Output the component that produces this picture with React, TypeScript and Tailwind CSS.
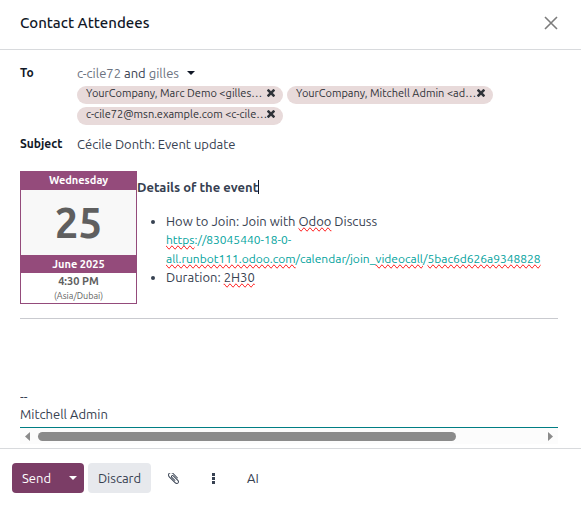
import React from "react";

const recipients = [
  "YourCompany, Marc Demo <gilles…",
  "YourCompany, Mitchell Admin <ad…",
  "c-cile72@msn.example.com <c-cile…",
];

function RemoveIcon() {
  return (
    <svg viewBox="302 366 1188 1188" className="size-2" fill="currentColor" aria-hidden="true">
      <path d="M1490 1322q0 40-28 68l-136 136q-28 28-68 28t-68-28l-294-294-294 294q-28 28-68 28t-68-28l-136-136q-28-28-28-68t28-68l294-294-294-294q-28-28-28-68t28-68l136-136q28-28 68-28t68 28l294 294 294-294q28-28 68-28t68 28l136 136q28 28 28 68t-28 68l-294 294 294 294q28 28 28 68z" />
    </svg>
  );
}

function PaperclipIcon() {
  return (
    <svg viewBox="0 256 1408 1408" className="size-[11px]" fill="currentColor" aria-hidden="true">
      <path d="M1404 1385q0 117-79 196t-196 79q-135 0-235-100l-777-776q-113-115-113-271 0-159 110-270t269-111q158 0 273 113l605 606q10 10 10 22 0 16-30.5 46.5t-46.5 30.5q-13 0-23-10l-606-607q-79-77-181-77-106 0-179 75t-73 181q0 105 76 181l776 777q63 63 145 63 64 0 106-42t42-106q0-82-63-145l-581-581q-26-24-60-24-29 0-48 19t-19 48q0 32 25 59l410 410q10 10 10 22 0 16-31 47t-47 31q-12 0-22-10l-410-410q-63-61-63-149 0-82 57-139t139-57q88 0 149 63l581 581q100 98 100 235z" />
    </svg>
  );
}

function Caret() {
  return (
    <svg viewBox="0 0 8 4" className="h-1 w-2" fill="currentColor" aria-hidden="true">
      <path d="M0 0h8L4 4z" />
    </svg>
  );
}

function Misspelled({ children }: { children: React.ReactNode }) {
  return <span className="[text-decoration-line:spelling-error]">{children}</span>;
}

function EventDate() {
  return (
    <div className="w-[117px] shrink-0 self-start border border-[#944b7b] text-center font-bold">
      <div className="h-[18px] bg-[#944b7b] text-[11px] leading-4 text-white">Wednesday</div>
      <div className="h-[65px] bg-[#f8f8f8] text-[42px] leading-[65px] text-[#5f5f5f]">25</div>
      <div className="h-[18px] bg-[#944b7b] text-[11px] leading-[18px] text-white">June 2025</div>
      <div className="h-4 text-[11px] leading-4 text-[#5f5f5f]">4:30 PM</div>
      <div className="h-[14px] text-[9px] leading-[14px] font-normal text-[#5f5f5f]">(Asia/Dubai)</div>
    </div>
  );
}

export default function App() {
  return (
    <div
      role="dialog"
      aria-labelledby="dialog-title"
      className="bg-white font-['Ubuntu','Open_Sans','Noto_Sans',sans-serif] text-[13px] leading-[18px] text-[#374151]"
    >
      <header className="flex h-[50px] items-center justify-between border-b border-[#d8dadd] pr-[23px] pb-1 pl-5">
        <h1 id="dialog-title" className="text-[15px] leading-5 font-medium text-[#111827]">Contact Attendees</h1>
        <button type="button" aria-label="Close" className="text-[#7c7c7c]">
          <svg viewBox="0 0 14 14" className="size-[14px]" fill="none" stroke="currentColor" strokeWidth="1.6" aria-hidden="true">
            <path d="M1 1l12 12M13 1L1 13" />
          </svg>
        </button>
      </header>

      <main className="pr-[23px] pb-1 pl-5">
        <div className="grid grid-cols-[57px_1fr] pt-[14px]">
          <div className="text-[12px] font-semibold text-[#111827]">To</div>
          <div>
            <div className="flex items-center gap-2">
              <span>
                <span className="text-[#6b7280]">c-cile72</span> and <span className="text-[#6b7280]">gilles</span>
              </span>
              <button type="button" aria-label="Show recipients" className="text-[#111827]"><Caret /></button>
            </div>
            <ul className="mt-1 flex flex-wrap gap-x-1 gap-y-[3px] text-[11px]">
              {recipients.map((name) => (
                <li key={name} className="flex h-[18px] w-[206px] items-start justify-between rounded-full bg-[#e8dada] pr-2 pl-[9px] text-[#2f3238]">
                  <span className="overflow-hidden leading-[15px] whitespace-nowrap">{name}</span>
                  <button type="button" aria-label={`Remove ${name}`} className="mt-[3px] shrink-0"><RemoveIcon /></button>
                </li>
              ))}
            </ul>
          </div>
        </div>

        <div className="grid grid-cols-[57px_1fr] pt-[10px]">
          <label htmlFor="subject" className="text-[12px] font-semibold text-[#111827]">Subject</label>
          <input id="subject" type="text" defaultValue="Cécile Donth: Event update" className="h-[18px] w-full outline-none" />
        </div>

        <div className="mt-[18px] overflow-hidden border-b border-[#017e84]" role="textbox" aria-label="Message" aria-multiline="true">
          <div className="flex">
            <EventDate />
            <div className="min-w-0 pt-[7px]">
              <p className="font-bold">
                Details of the event<span className="inline-block h-[14px] w-px bg-[#111827] align-text-bottom" />
              </p>
              <ul className="mt-4 list-disc pl-[29px]">
                <li>
                  How to Join: Join with <Misspelled>Odoo</Misspelled> Discuss
                  <a href="#join" className="block text-[12px] leading-[19px] whitespace-nowrap text-[#01a29d]">
                    <Misspelled>https</Misspelled>://83045440-18-0-
                    <br />
                    <Misspelled>all.runbot111.odoo.com</Misspelled>/calendar/join_<Misspelled>videocall</Misspelled>/<Misspelled>5bac6d626a9348828</Misspelled>
                  </a>
                </li>
                <li>Duration: <Misspelled>2H30</Misspelled></li>
              </ul>
            </div>
          </div>
          <hr className="mt-[14px] border-[#c9cacf]" />
          <div className="pt-[68px] pb-1">
            <p>--</p>
            <p>Mitchell Admin</p>
          </div>
        </div>

        <div className="flex h-4 items-center bg-[#fcfcfc] px-[5px] text-[#8b8b8b]" aria-hidden="true">
          <svg viewBox="0 0 5 9" className="h-[9px] w-[5px]" fill="currentColor"><path d="M5 0v9L0 4.5z" /></svg>
          <div className="mx-2 flex-1">
            <div className="h-[9px] w-5/6 rounded-full bg-[#8b8b8b]" />
          </div>
          <svg viewBox="0 0 5 9" className="h-[9px] w-[5px]" fill="currentColor"><path d="M0 0v9l5-4.5z" /></svg>
        </div>
      </main>

      <footer className="flex items-center gap-1 border-t border-[#d8dadd] px-3 pt-[14px] pb-3">
        <div className="flex h-[30px] overflow-hidden rounded bg-[#7b3d66] text-white">
          <button type="button" className="w-[49px]">Send</button>
          <button type="button" aria-label="More send options" className="flex w-[23px] items-center justify-center"><Caret /></button>
        </div>
        <button type="button" className="h-[30px] w-[63px] rounded bg-[#e7e9ed]">Discard</button>
        <button type="button" aria-label="Attach a file" className="flex h-[30px] w-9 items-center justify-center"><PaperclipIcon /></button>
        <button type="button" aria-label="More" className="flex h-[30px] w-9 items-center justify-center">
          <svg viewBox="0 0 3 11" className="h-[11px] w-[3px]" fill="currentColor" aria-hidden="true">
            <path d="M0 0h3v3H0zM0 4h3v3H0zM0 8h3v3H0z" />
          </svg>
        </button>
        <button type="button" className="h-[30px] w-9">AI</button>
      </footer>
    </div>
  );
}
